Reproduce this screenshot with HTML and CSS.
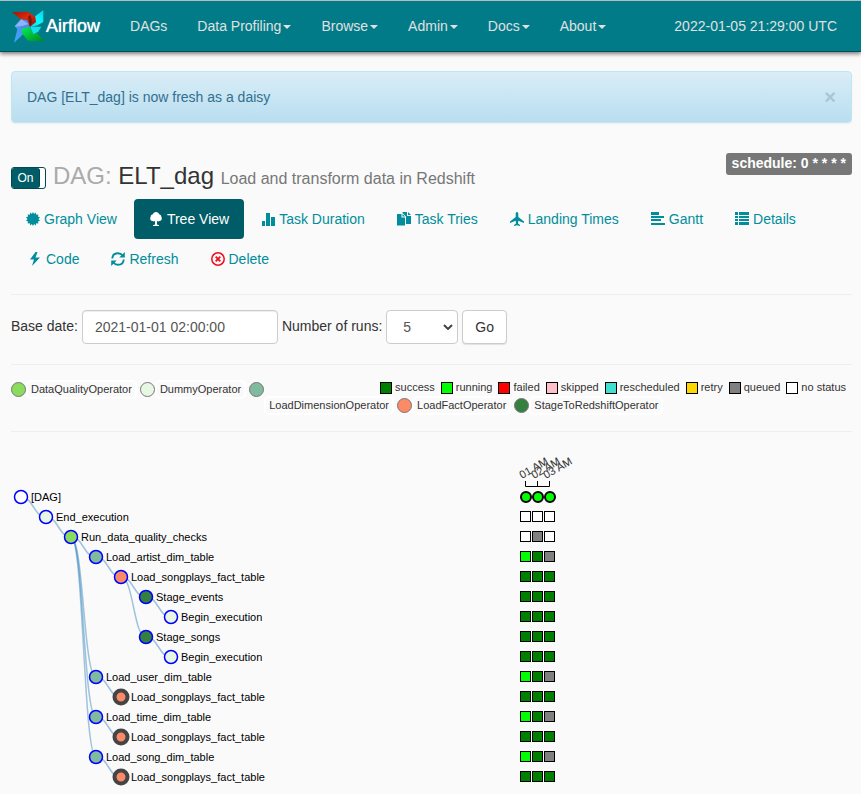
FILE: index.html
```html
<!DOCTYPE html>
<html lang="en">
<head>
<meta charset="utf-8">
<title>Airflow - ELT_dag</title>
<link rel="stylesheet" href="styles.css">
</head>
<body>
<nav class="navbar">
  <a class="brand" href="#">
    <svg class="logo" viewBox="36 30 99 99" aria-hidden="true">
      <defs>
        <linearGradient id="red" x1="0" y1="0" x2="1" y2="1"><stop offset="0" stop-color="#8e1a0c"/><stop offset=".5" stop-color="#e4260b"/><stop offset="1" stop-color="#8d1208"/></linearGradient>
        <linearGradient id="cyan" x1="1" y1="0" x2="0" y2="1"><stop offset="0" stop-color="#19c8e8"/><stop offset=".5" stop-color="#0ff"/><stop offset="1" stop-color="#0ad6e6"/></linearGradient>
        <linearGradient id="green" x1="0" y1="0" x2="1" y2="1"><stop offset="0" stop-color="#00f060"/><stop offset="1" stop-color="#008a10"/></linearGradient>
        <linearGradient id="blue" x1="1" y1="0" x2="0" y2="1"><stop offset="0" stop-color="#5a7ee0"/><stop offset="1" stop-color="#3aa8ff"/></linearGradient>
      </defs>
      <path fill="url(#blue)" d="M86 60 62 58 44 78 52 88 42 128 68 104 90 80Z"/>
      <path fill="#8fb4f5" d="M64 58 44 80 66 78 86 72Z"/>
      <path fill="url(#green)" d="M88 80 64 88 66 100 84 122 134 123 110 100 98 98Z"/>
      <path fill="url(#cyan)" d="M130 30 130 66 112 76 92 82 104 50Z"/>
      <path fill="#12dfe8" d="M90 80 124 80 114 96 100 102Z"/>
      <path fill="url(#red)" d="M36 36 84 35 106 50 108 66 90 80 82 60 60 56Z"/>
      <path fill="#3d1512" d="M84 50 92 44 96 66 90 80Z" opacity=".6"/>
    </svg>
    <span>Airflow</span>
  </a>
  <ul class="menu">
    <li><a href="#">DAGs</a></li>
    <li><a href="#">Data Profiling<i class="caret"></i></a></li>
    <li><a href="#">Browse<i class="caret"></i></a></li>
    <li><a href="#">Admin<i class="caret"></i></a></li>
    <li><a href="#">Docs<i class="caret"></i></a></li>
    <li><a href="#">About<i class="caret"></i></a></li>
  </ul>
  <a class="clock" href="#">2022-01-05 21:29:00 UTC</a>
</nav>

<main class="page">
  <div class="alert" role="alert">
    <span>DAG [ELT_dag] is now fresh as a daisy</span>
    <button class="close" type="button" aria-label="Close">×</button>
  </div>

  <header class="title-row">
    <div class="title">
      <button class="toggle" type="button" aria-pressed="true"><span>On</span></button>
      <h3><span class="muted">DAG:</span> ELT_dag <small>Load and transform data in Redshift</small></h3>
    </div>
    <a class="schedule" href="#">schedule: 0 * * * *</a>
  </header>

  <ul class="tabs">
    <li><a href="#"><svg class="icon" viewBox="0 0 14 14"><path d="M7 0 8.1 2 9.8.6 10.2 2.8 12.4 2.4 11.9 4.6 14 5.200 12.500 7 14 8.800 11.900 9.400 12.400 11.600 10.200 11.200 9.800 13.400 8.100 12 7 14 5.900 12 4.200 13.400 3.800 11.200 1.600 11.600 2.100 9.400 0 8.800 1.500 7 0 5.200 2.100 4.600 1.600 2.400 3.800 2.800 4.200.6 5.900 2Z"/></svg>Graph View</a></li>
    <li><a class="active" href="#"><svg class="icon" viewBox="0 0 14 14"><path d="M7 0C8.600 0 9.800 1 10 2.200 11.500 2.500 12.500 3.500 12.300 5 13.500 6.500 12.500 9 10.500 9 9.600 9.600 8.700 9.500 8 9V12.500L10 13.200V14H4V13.200L6 12.500V9C5.300 9.500 4.400 9.600 3.500 9 1.500 9 .5 6.500 1.700 5 1.500 3.500 2.500 2.500 4 2.200 4.200 1 5.400 0 7 0Z"/></svg>Tree View</a></li>
    <li><a href="#"><svg class="icon" viewBox="0 0 14 14"><path d="M1 9H4V14H1ZM5 1H9V14H5ZM10 5H14V14H10Z"/></svg>Task Duration</a></li>
    <li><a href="#"><svg class="icon" viewBox="0 0 14 14"><path d="M0 2H4.500V5.500H8V13.500H0ZM5.500 2 8 4.500H5.500ZM5.500 0H10V4H14V12H9V4.500L5.500 1ZM11 0 14 3H11Z"/></svg>Task Tries</a></li>
    <li><a href="#"><svg class="icon" viewBox="0 0 14 14"><path d="M7 0C8 0 8.300 1 8.300 2V5L14 9.500V11L8.300 8.800 8 11.500 10 13V14L7 13.200 4 14V13L6 11.500 5.700 8.800 0 11V9.500L5.700 5V2C5.700 1 6 0 7 0Z"/></svg>Landing Times</a></li>
    <li><a href="#"><svg class="icon" viewBox="0 0 14 14"><path d="M0 0H8V3H0ZM0 4H13V6H0ZM0 7H10V9H0ZM0 11H14V13H0Z"/></svg>Gantt</a></li>
    <li><a href="#"><svg class="icon" viewBox="0 0 14 14"><path d="M0 0H3V3H0ZM4 0H14V3H4ZM0 4H3V6H0ZM4 4H14V6H4ZM0 7H3V9H0ZM4 7H14V9H4ZM0 10H3V13H0ZM4 10H14V13H4Z"/></svg>Details</a></li>
    <li><a href="#"><svg class="icon wide" viewBox="0 0 16 14"><path d="M9.500 0 4 7.500H8L6 14 14 5.500H9.500L11.500 0Z"/></svg>Code</a></li>
    <li><a href="#"><svg class="icon" viewBox="0 0 14 14"><path fill="none" stroke="currentColor" stroke-width="1.900" d="M1.300 6.500C1.500 3 4 1.200 7 1.200 9 1.200 10.500 2 11.700 3.500M12.700 7.500C12.500 11 10 12.800 7 12.800 5 12.800 3.500 12 2.300 10.500"/><path d="M13.800 0V5.500H8.300ZM.2 14V8.500H5.700Z"/></svg>Refresh</a></li>
    <li><a href="#"><svg class="icon danger" viewBox="0 0 14 14"><circle cx="7" cy="7" r="6.200" fill="none" stroke="currentColor" stroke-width="1.500"/><path fill="none" stroke="currentColor" stroke-width="1.800" d="M4.700 4.700 9.300 9.300M9.300 4.700 4.700 9.300"/></svg>Delete</a></li>
  </ul>

  <hr>

  <form class="filters">
    <label for="base-date">Base date:</label>
    <input id="base-date" type="text" value="2021-01-01 02:00:00">
    <label for="runs">Number of runs:</label>
    <span class="select-box">
      <select id="runs"><option>5</option><option>25</option><option>50</option></select>
      <svg viewBox="0 0 10 6" aria-hidden="true"><path d="M1 1 5 5 9 1"/></svg>
    </span>
    <button type="button">Go</button>
  </form>

  <hr>

  <section class="legend">
    <ul class="states">
      <li class="success">success</li>
      <li class="running">running</li>
      <li class="failed">failed</li>
      <li class="skipped">skipped</li>
      <li class="rescheduled">rescheduled</li>
      <li class="retry">retry</li>
      <li class="queued">queued</li>
      <li class="none">no status</li>
    </ul>
    <i class="dot quality"></i><span class="operator">DataQualityOperator</span>
    <i class="dot dummy"></i><span class="operator">DummyOperator</span>
    <i class="dot dimension"></i><span class="operator">LoadDimensionOperator</span>
    <i class="dot fact"></i><span class="operator">LoadFactOperator</span>
    <i class="dot stage"></i><span class="operator">StageToRedshiftOperator</span>
  </section>

  <hr>

  <svg id="tree" class="tree" width="600" height="340" role="img" aria-label="Task tree"></svg>
</main>
<script src="tree.js"></script>
</body>
</html>
```
FILE: styles.css
```css
*, *::before { box-sizing: border-box; }

body {
  margin: 0;
  background: #fafafa;
  color: #333;
  font: 14px/20px "Liberation Sans", Arial, sans-serif;
}

a { color: #018d9b; text-decoration: none; }
ul { list-style: none; margin: 0; padding: 0; }
button, input, select { font: inherit; }

.navbar {
  display: flex;
  align-items: center;
  height: 52px;
  padding: 0 9px 0 12px;
  background: #017b88;
  border-top: 1px solid #b5bcbd;
  border-bottom: 1px solid #014d55;
  box-shadow: 0 2px 4px rgba(0, 0, 0, .5);
}
.navbar a { color: #e0e0e0; }
.navbar .brand {
  display: flex;
  align-items: center;
  gap: 1px;
  margin-right: 15px;
  color: #fff;
  font-size: 18px;
  text-shadow: 0 0 1px #fff;
}
.logo { width: 33px; height: 33px; }
.menu { display: flex; flex: 1; }
.menu a { display: block; padding: 15px; white-space: nowrap; }
.caret {
  display: inline-block;
  margin-left: 2px;
  vertical-align: middle;
  border: 4px solid transparent;
  border-top-color: currentColor;
  border-bottom: 0;
}
.clock { padding: 15px; white-space: nowrap; }

.page { padding: 19px 9px 0 11px; }

.alert {
  display: flex;
  justify-content: space-between;
  padding: 15px;
  border: 1px solid #bce8f1;
  border-radius: 4px;
  background: linear-gradient(#d9edf7, #b9def0);
  box-shadow: 0 1px 2px rgba(0, 0, 0, .05);
  color: #31708f;
}
.close {
  height: 20px;
  padding: 0;
  border: 0;
  background: none;
  color: #31708f;
  font-size: 20px;
  font-weight: bold;
  line-height: 16px;
  opacity: .25;
}

.title-row {
  display: flex;
  justify-content: space-between;
  align-items: flex-start;
  padding-top: 30px;
}
.title { display: flex; align-items: center; gap: 7px; padding-top: 8px; }
.toggle {
  width: 35px;
  height: 22px;
  padding: 0;
  border: 1px solid #004b53;
  border-radius: 3px;
  background: #fff;
  color: #fff;
  font-size: 12px;
  overflow: hidden;
}
.toggle span {
  display: block;
  width: 28px;
  border-right: 1px solid #004b53;
  background: #005c66;
  border-radius: 0 3px 3px 0;
}
h3 { margin: 0; font-size: 24px; font-weight: normal; line-height: 30px; }
.muted { color: #aaa; }
h3 small { color: #777; font-size: 16px; }
.schedule {
  padding: 0 6px 2px;
  border-radius: 3px;
  background: #777;
  color: #fff;
  font-weight: bold;
}

.tabs { display: flex; flex-wrap: wrap; column-gap: 2px; padding-top: 5px; }
.tabs a { display: flex; align-items: center; gap: 4px; padding: 10px 15px; border-radius: 4px; }
.tabs .active { background: #005c66; color: #fff; }
.icon { width: 14px; height: 14px; fill: currentColor; }
.icon.wide { width: 16px; }
.danger { color: #f00c1a; }

hr { margin: 15px 0; border: 0; border-top: 1px solid #eee; }

.filters { display: flex; align-items: center; gap: 4px; margin-bottom: 20px; }
.filters label { padding-bottom: 2px; }
.filters input, .filters select, .filters button {
  height: 34px;
  border: 1px solid #ccc;
  border-radius: 4px;
  background: #fff;
  color: #555;
}
.filters input { width: 196px; padding: 0 12px; box-shadow: inset 0 1px 1px rgba(0, 0, 0, .075); }
.select-box { position: relative; }
.select-box select { display: block; width: 72px; padding: 0 16px; appearance: none; }
.select-box svg {
  position: absolute;
  top: 14px;
  right: 5px;
  width: 10px;
  height: 6px;
  fill: none;
  stroke: #444;
  stroke-width: 2;
  pointer-events: none;
}
.filters button { padding: 0 12px; color: #333; box-shadow: 0 1px 1px rgba(0, 0, 0, .1); }

.legend { display: flow-root; margin-bottom: 16px; font-size: 11px; line-height: 15px; }
.states { display: flex; float: right; gap: 6px; height: 16px; padding-right: 6px; line-height: 14px; }
.states li { display: flex; gap: 3px; }
.states li::before { content: ""; width: 12px; height: 12px; margin-top: 2px; border: 1px solid #000; background: var(--state); }
.success { --state: #008000; }
.running { --state: #00ff00; }
.failed { --state: #ff0000; }
.skipped { --state: #ffc0cb; }
.rescheduled { --state: #40e0d0; }
.retry { --state: #ffd700; }
.queued { --state: #808080; }
.none { --state: #ffffff; }
.dot { float: left; width: 15px; height: 15px; margin: 2px 0; border: 1px solid #777; border-radius: 50%; }
.operator { float: left; margin-right: 3px; padding: 0 3px; border: 2px solid #fff; border-radius: 5px; }
.quality { background: #8bdb5c; }
.dummy { background: #e8f7e4; }
.dimension { background: #80bba0; }
.fact { background: #fb8a66; }
.stage { background: #35803f; }

.tree { display: block; max-width: 100%; font-size: 11px; }
.tree text { fill: #000; }
.link { fill: none; stroke: #1f77b4; stroke-opacity: .42; stroke-width: 1.5px; }
.node { stroke: #00f; stroke-width: 1.5px; }
.node.collapsed { stroke: #444; stroke-width: 4px; }
.task { stroke: #000; }
.run { fill: #0f0; stroke: #000; stroke-width: 2px; }
.axis { fill: none; stroke: #000; }
.tree .tick { fill: #333; }
```
FILE: tree.js
```js
const colors = {
  root: "#fff", dummy: "#e8f7e4", quality: "#8bdb5c",
  dim: "#80bba0", fact: "#fb8a66", stage: "#35803f"
};
const states = { s: "#008000", r: "#00ff00", q: "#808080", n: "#ffffff" };

// [label, depth, parent row, operator, run states, collapsed]
const rows = [
  ["[DAG]", 0, -1, "root", ""],
  ["End_execution", 1, 0, "dummy", "nnn"],
  ["Run_data_quality_checks", 2, 1, "quality", "nqn"],
  ["Load_artist_dim_table", 3, 2, "dim", "rsq"],
  ["Load_songplays_fact_table", 4, 3, "fact", "sss"],
  ["Stage_events", 5, 4, "stage", "sss"],
  ["Begin_execution", 6, 5, "dummy", "sss"],
  ["Stage_songs", 5, 4, "stage", "sss"],
  ["Begin_execution", 6, 7, "dummy", "sss"],
  ["Load_user_dim_table", 3, 2, "dim", "rsq"],
  ["Load_songplays_fact_table", 4, 9, "fact", "sss", true],
  ["Load_time_dim_table", 3, 2, "dim", "rsq"],
  ["Load_songplays_fact_table", 4, 11, "fact", "sss", true],
  ["Load_song_dim_table", 3, 2, "dim", "rsq"],
  ["Load_songplays_fact_table", 4, 13, "fact", "sss", true]
];

const px = depth => 10 + depth * 25;
const py = row => 50 + row * 20;
let links = "", nodes = "", runs = "";

rows.forEach(([label, depth, parent, operator, run, collapsed], i) => {
  const x = px(depth), y = py(i);
  if (parent >= 0) {
    const sx = px(rows[parent][1]), sy = py(parent), mid = (sx + x) / 2;
    links += `<path class="link" d="M${sx} ${sy}C${mid} ${sy} ${mid} ${y} ${x} ${y}"/>`;
  }
  nodes += `<circle class="node${collapsed ? " collapsed" : ""}" cx="${x}" cy="${y}" r="6.5" fill="${colors[operator]}"/>`;
  nodes += `<text x="${x + 10}" y="${y + 4}">${label}</text>`;
  [...run].forEach((state, n) => {
    runs += `<rect class="task" x="${509.5 + n * 12}" y="${y - 5.5}" width="10" height="10" fill="${states[state]}"/>`;
  });
});

["01 AM", "02 AM", "03 AM"].forEach((hour, n) => {
  const x = 515 + n * 12;
  runs += `<circle class="run" cx="${x}" cy="50" r="5"/>`;
  runs += `<text class="tick" transform="translate(${x - 4} 32) rotate(-30)">${hour}</text>`;
});
runs += `<path class="axis" d="M514.5 34V39.5H538.5V34M526.5 34V39.5"/>`;

document.getElementById("tree").innerHTML = links + nodes + runs;
```
